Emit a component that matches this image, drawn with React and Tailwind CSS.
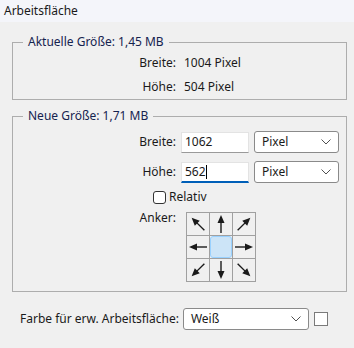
const font = { fontFamily: '"Noto Sans", "Segoe UI", sans-serif' };

const Chevron = () => (
    <svg width="10" height="6" viewBox="0 0 10 6" className="mr-[7px]">
        <path d="M0.5 0.5 L5 5 L9.5 0.5" fill="none" stroke="#505050" strokeWidth="1" />
    </svg>
);

const Select = ({ value, className }) => (
    <div className={`flex items-center justify-between bg-white border border-[#8a8a8a] rounded-[3px] ${className}`}>
        <span className="pl-[7px] text-[12px] text-[#1a1a1a]">{value}</span>
        <Chevron />
    </div>
);

// arrow pointing right, rotated per cell
const Arrow = ({ angle }) => (
    <svg width="22" height="22" viewBox="0 0 22 22">
        <g transform={`rotate(${angle} 11 11)`}>
            <line x1="2" y1="11" x2="14" y2="11" stroke="#1a1a1a" strokeWidth="1.4" />
            <path d="M20 11 L12 7.5 L12 14.5 Z" fill="#1a1a1a" />
        </g>
    </svg>
);

const anchors = [-135, -90, -45, 180, null, 0, 135, 90, 45];

const Label = ({ children }) => (
    <span className="w-[153px] shrink-0 text-right text-[12px] text-[#1a1a1a]">{children}</span>
);

export default function App() {
    return (
        <div className="w-[354px] h-[348px] bg-[#f0f0f0] overflow-hidden" style={font}>
            <div className="h-[22px] bg-[#f4f5fa] flex items-center pl-[4px] text-[12px] text-[#1a1a1a]">
                Arbeitsfläche
            </div>

            <div className="pl-[12px] pr-[7px]">
                <fieldset className="mt-[12px] border border-[#adadad] pl-[10px] pr-[10px]">
                    <legend className="px-[5px] text-[12px] leading-[16px] text-[#15234f]">
                        Aktuelle Größe: 1,45 MB
                    </legend>
                    <div className="pt-[1px]">
                        <div className="h-6 flex items-center">
                            <Label>Breite:</Label>
                            <span className="ml-[8px] text-[12px] text-[#1a1a1a]">1004 Pixel</span>
                        </div>
                        <div className="h-6 flex items-center">
                            <Label>Höhe:</Label>
                            <span className="ml-[8px] text-[12px] text-[#1a1a1a]">504 Pixel</span>
                        </div>
                    </div>
                </fieldset>

                <fieldset className="mt-[8px] border border-[#adadad] pl-[10px] pr-[7px] pb-[9px]">
                    <legend className="px-[5px] text-[12px] leading-[16px] text-[#15234f]">
                        Neue Größe: 1,71 MB
                    </legend>
                    <div className="mt-[7px] flex flex-col">
                        <div className="h-[22px] flex items-center">
                            <Label>Breite:</Label>
                            <div className="ml-[5px] w-[68px] h-[21px] bg-white border border-[#e3e3e3] border-b-[#9a9a9a] flex items-center pl-[3px] text-[12px] text-[#1a1a1a]">
                                1062
                            </div>
                            <Select value="Pixel" className="ml-[5px] w-[85px] h-[22px]" />
                        </div>
                        <div className="mt-[8px] h-[22px] flex items-center">
                            <Label>Höhe:</Label>
                            <div className="ml-[5px] w-[68px] h-[21px] bg-white border border-[#e3e3e3] border-b-2 border-b-[#005fb8] flex items-center pl-[3px] text-[12px] text-[#1a1a1a]">
                                562<span className="w-px h-[14px] bg-black" />
                            </div>
                            <Select value="Pixel" className="ml-[5px] w-[85px] h-[22px]" />
                        </div>
                        <div className="mt-[2px] h-[24px] flex items-center pl-[130px]">
                            <span className="w-[13px] h-[13px] bg-white border border-[#333] rounded-[3px]" />
                            <span className="ml-[3px] text-[12px] text-[#1a1a1a]">Relativ</span>
                        </div>
                        <div className="flex items-start">
                            <Label>Anker:</Label>
                            <div className="ml-[10px] mt-[3px] grid grid-cols-3 w-[70px] h-[70px] border-t border-l border-[#a0a0a0]">
                                {anchors.map((a, i) => (
                                    <div key={i} className="border-r border-b border-[#a0a0a0] flex items-center justify-center">
                                        {a === null ? (
                                            <div className="w-[22px] h-[22px] bg-[#cce4f7] border border-[#99d1ff] rounded-[3px]" />
                                        ) : (
                                            <Arrow angle={a} />
                                        )}
                                    </div>
                                ))}
                            </div>
                        </div>
                    </div>
                </fieldset>

                <div className="mt-[16px] flex items-center pl-[8px]">
                    <span className="text-[12px] text-[#1a1a1a]">Farbe für erw. Arbeitsfläche:</span>
                    <Select value="Weiß" className="ml-[4px] w-[126px] h-[22px]" />
                    <span className="ml-[5px] w-[14px] h-[14px] bg-white border border-[#7a7a7a]" />
                </div>
            </div>
        </div>
    );
}
